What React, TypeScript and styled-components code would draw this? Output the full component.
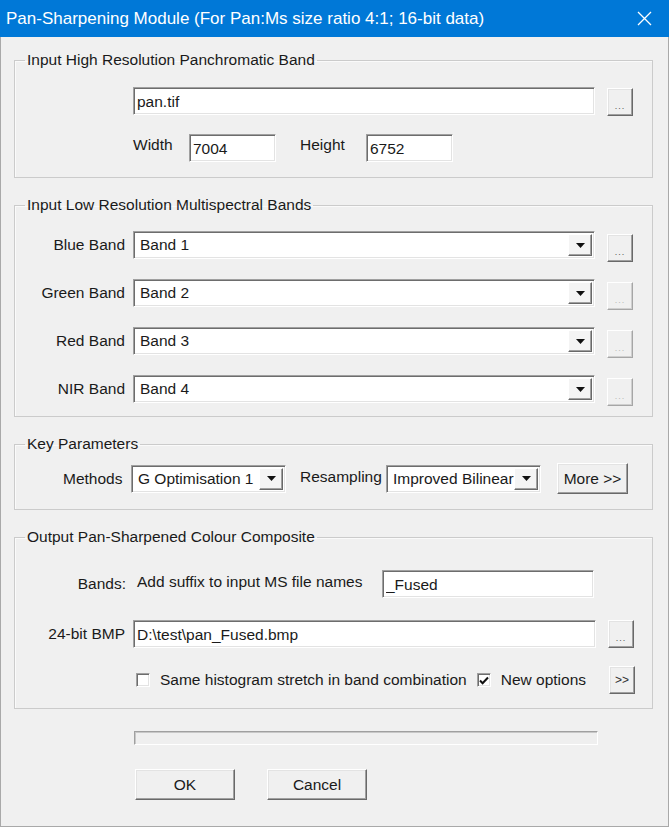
import React from 'react'
import styled, { createGlobalStyle } from 'styled-components'

const GlobalStyle = createGlobalStyle`
  html, body {
    margin: 0;
    padding: 0;
    background: #f0f0f0;
  }
  * {
    box-sizing: border-box;
  }
`

const uiFont = `"Liberation Sans", Arial, sans-serif`

const Window = styled.div`
  width: 669px;
  height: 827px;
  display: flex;
  flex-direction: column;
  background: #f0f0f0;
  border: 1px solid #a9a9a9;
  border-top: none;
  font-family: ${uiFont};
  font-size: 15.5px;
  color: #1a1a1a;
`

const TitleBar = styled.div`
  height: 37px;
  margin: 0 -1px;
  flex: none;
  display: flex;
  align-items: center;
  justify-content: space-between;
  padding: 0 17px 0 6px;
  background: #0078d7;
  color: #fff;
  font-size: 17px;
`

const Body = styled.div`
  display: flex;
  flex-direction: column;
  gap: 19px;
  padding: 15px 15px 0 13px;
`

const GroupBox = styled.fieldset<{ $pt: number; $pb: number; $gap: number }>`
  margin: 0;
  min-width: 0;
  padding: ${({ $pt }) => $pt}px 0 ${({ $pb }) => $pb}px 0;
  border: 1px solid #cbcbcb;
  box-shadow: inset 1px 1px 0 #fafafa;
  display: flex;
  flex-direction: column;
  gap: ${({ $gap }) => $gap}px;
`

const Legend = styled.legend`
  margin-left: 10px;
  padding: 0 2px;
  line-height: 16px;
`

const Row = styled.div<{ $indent?: number; $mt?: number }>`
  display: flex;
  align-items: center;
  padding-left: ${({ $indent }) => $indent ?? 0}px;
  margin-top: ${({ $mt }) => $mt ?? 0}px;
`

const RowLabel = styled.span<{ $w?: number }>`
  width: ${({ $w }) => $w ?? 110}px;
  margin-right: 8px;
  flex: none;
  text-align: right;
  white-space: nowrap;
`

const InlineLabel = styled.span<{ $w: number; $ml?: number; $up?: number }>`
  width: ${({ $w }) => $w}px;
  margin-left: ${({ $ml }) => $ml ?? 0}px;
  margin-top: -${({ $up }) => $up ?? 0}px;
  flex: none;
  white-space: nowrap;
`

const sunken = `
  background: #fff;
  border-style: solid;
  border-width: 1px;
  border-color: #a0a0a0 #ffffff #ffffff #a0a0a0;
  box-shadow: inset 1px 1px 0 #6d6d6d, inset -1px -1px 0 #e3e3e3;
`

const TextBox = styled.input<{ $w: number; $ml?: number }>`
  ${sunken}
  width: ${({ $w }) => $w}px;
  height: 28px;
  margin: 0 0 0 ${({ $ml }) => $ml ?? 0}px;
  padding: 2px 0 0 3px;
  flex: none;
  font-family: ${uiFont};
  font-size: 15.5px;
  color: #1a1a1a;
  outline: none;
`

const ComboBox = styled.div<{ $w: number }>`
  ${sunken}
  width: ${({ $w }) => $w}px;
  height: 28px;
  flex: none;
  display: flex;
  align-items: stretch;
  padding: 2px;
`

const ComboText = styled.span`
  flex: 1;
  padding: 2px 0 0 4px;
  white-space: nowrap;
  overflow: hidden;
`

const ComboArrow = styled.span`
  width: 24px;
  flex: none;
  display: flex;
  align-items: center;
  justify-content: center;
  background: #f4f4f4;
  border-style: solid;
  border-width: 1px;
  border-color: #ffffff #696969 #696969 #ffffff;
  box-shadow: inset -1px -1px 0 #a0a0a0;
`

const raised = `
  background: #f0f0f0;
  border-style: solid;
  border-width: 1px;
  border-color: #ffffff #696969 #696969 #ffffff;
  box-shadow: inset -1px -1px 0 #a0a0a0, inset 1px 1px 0 #e3e3e3;
`

const SmallButton = styled.button<{ $offset?: number; $ml?: number }>`
  ${raised}
  width: 26px;
  height: 28px;
  margin: ${({ $offset }) => $offset ?? 0}px 0 -${({ $offset }) => $offset ?? 0}px
    ${({ $ml }) => $ml ?? 12}px;
  padding: 0;
  flex: none;
  font-family: ${uiFont};
  font-size: 12px;
  color: #333;
`

const Dots = styled.span<{ $disabled?: boolean }>`
  display: block;
  padding-top: 7px;
  font-size: 9px;
  letter-spacing: 1px;
  color: ${({ $disabled }) => ($disabled ? '#b8b8b8' : '#555')};
`

const DotsButton: React.FC<{ disabled?: boolean; offset?: number }> = ({ disabled, offset }) => (
  <SmallButton
    $offset={offset}
    style={disabled ? { borderColor: '#fff #a6a6a6 #a6a6a6 #fff', boxShadow: 'inset -1px -1px 0 #cfcfcf' } : undefined}
  >
    <Dots $disabled={disabled}>...</Dots>
  </SmallButton>
)

const PushButton = styled.button<{ $w: number; $h: number; $ml?: number }>`
  ${raised}
  width: ${({ $w }) => $w}px;
  height: ${({ $h }) => $h}px;
  margin: 0 0 0 ${({ $ml }) => $ml ?? 0}px;
  padding: 0;
  flex: none;
  font-family: ${uiFont};
  font-size: 15.5px;
  color: #1a1a1a;
`

const Check = styled.span<{ $ml?: number }>`
  ${sunken}
  width: 14px;
  height: 14px;
  margin-left: ${({ $ml }) => $ml ?? 0}px;
  flex: none;
  display: flex;
  align-items: center;
  justify-content: center;
`

const CheckText = styled.span<{ $ml: number }>`
  margin-left: ${({ $ml }) => $ml}px;
  white-space: nowrap;
`

const Spacer = styled.span<{ $w: number }>`
  width: ${({ $w }) => $w}px;
  flex: none;
`

const Footer = styled.div`
  display: flex;
  flex-direction: column;
  gap: 24px;
  padding: 22px 0 0 133px;
`

const Progress = styled.div`
  width: 464px;
  height: 14px;
  border-style: solid;
  border-width: 1px;
  border-color: #a0a0a0 #ffffff #ffffff #a0a0a0;
  box-shadow: inset 1px 1px 0 #c8c8c8;
  background: #efefef;
`

const ButtonRow = styled.div`
  display: flex;
  padding-left: 1px;
`

const CloseIcon = () => (
  <svg width="15" height="15" viewBox="0 0 15 15">
    <path d="M1 1 L14 14 M14 1 L1 14" stroke="#fff" strokeWidth="1.3" />
  </svg>
)

const ArrowDown = () => (
  <svg width="9" height="5" viewBox="0 0 9 5">
    <path d="M0 0 H9 L4.5 5 Z" fill="#111" />
  </svg>
)

const CheckMark = () => (
  <svg width="10" height="9" viewBox="0 0 10 9">
    <path d="M1 4.5 L3.6 7.2 L9 1.5" fill="none" stroke="#111" strokeWidth="2" />
  </svg>
)

const Combo: React.FC<{ w: number; value: string }> = ({ w, value }) => (
  <ComboBox $w={w}>
    <ComboText>{value}</ComboText>
    <ComboArrow>
      <ArrowDown />
    </ComboArrow>
  </ComboBox>
)

const bands = [
  { label: 'Blue Band', value: 'Band 1', enabled: true },
  { label: 'Green Band', value: 'Band 2', enabled: false },
  { label: 'Red Band', value: 'Band 3', enabled: false },
  { label: 'NIR Band', value: 'Band 4', enabled: false },
]

export default function App() {
  return (
    <>
      <GlobalStyle />
      <Window>
        <TitleBar>
          <span>Pan-Sharpening Module (For Pan:Ms size ratio 4:1; 16-bit data)</span>
          <CloseIcon />
        </TitleBar>
        <Body>
          <GroupBox $pt={19} $pb={15} $gap={19}>
            <Legend>Input High Resolution Panchromatic Band</Legend>
            <Row>
              <Spacer $w={118} />
              <TextBox $w={462} defaultValue="pan.tif" readOnly />
              <DotsButton offset={1} />
            </Row>
            <Row>
              <Spacer $w={118} />
              <InlineLabel $w={56} $up={6}>Width</InlineLabel>
              <TextBox $w={87} defaultValue="7004" readOnly />
              <InlineLabel $w={66} $ml={24} $up={6}>Height</InlineLabel>
              <TextBox $w={87} defaultValue="6752" readOnly />
            </Row>
          </GroupBox>

          <GroupBox $pt={18} $pb={13} $gap={20}>
            <Legend>Input Low Resolution Multispectral Bands</Legend>
            {bands.map((b) => (
              <Row key={b.label}>
                <RowLabel>{b.label}</RowLabel>
                <Combo w={462} value={b.value} />
                <DotsButton disabled={!b.enabled} offset={3} />
              </Row>
            ))}
          </GroupBox>

          <GroupBox $pt={11} $pb={15} $gap={0}>
            <Legend>Key Parameters</Legend>
            <Row $indent={48}>
              <InlineLabel $w={68}>Methods</InlineLabel>
              <Combo w={155} value="G Optimisation 1" />
              <InlineLabel $w={86} $ml={14} $up={4}>Resampling</InlineLabel>
              <Combo w={155} value="Improved Bilinear" />
              <PushButton $w={71} $h={31} $ml={16}>More &gt;&gt;</PushButton>
            </Row>
          </GroupBox>

          <GroupBox $pt={25} $pb={14} $gap={0}>
            <Legend>Output Pan-Sharpened Colour Composite</Legend>
            <Row>
              <RowLabel $w={111}>Bands:</RowLabel>
              <InlineLabel $w={245} $ml={3} $up={4}>Add suffix to input MS file names</InlineLabel>
              <TextBox $w={212} defaultValue="_Fused" readOnly />
            </Row>
            <Row $mt={22}>
              <RowLabel>24-bit BMP</RowLabel>
              <TextBox $w={463} defaultValue="D:\test\pan_Fused.bmp" readOnly />
              <DotsButton />
            </Row>
            <Row $mt={18}>
              <Check $ml={121} />
              <CheckText $ml={10}>Same histogram stretch in band combination</CheckText>
              <Check $ml={10}>
                <CheckMark />
              </Check>
              <CheckText $ml={10}>New options</CheckText>
              <SmallButton $ml={0} style={{ marginLeft: 'auto', marginRight: 17 }}>
                &gt;&gt;
              </SmallButton>
            </Row>
          </GroupBox>
        </Body>
        <Footer>
          <Progress />
          <ButtonRow>
            <PushButton $w={100} $h={31}>OK</PushButton>
            <PushButton $w={100} $h={31} $ml={32}>Cancel</PushButton>
          </ButtonRow>
        </Footer>
      </Window>
    </>
  )
}
